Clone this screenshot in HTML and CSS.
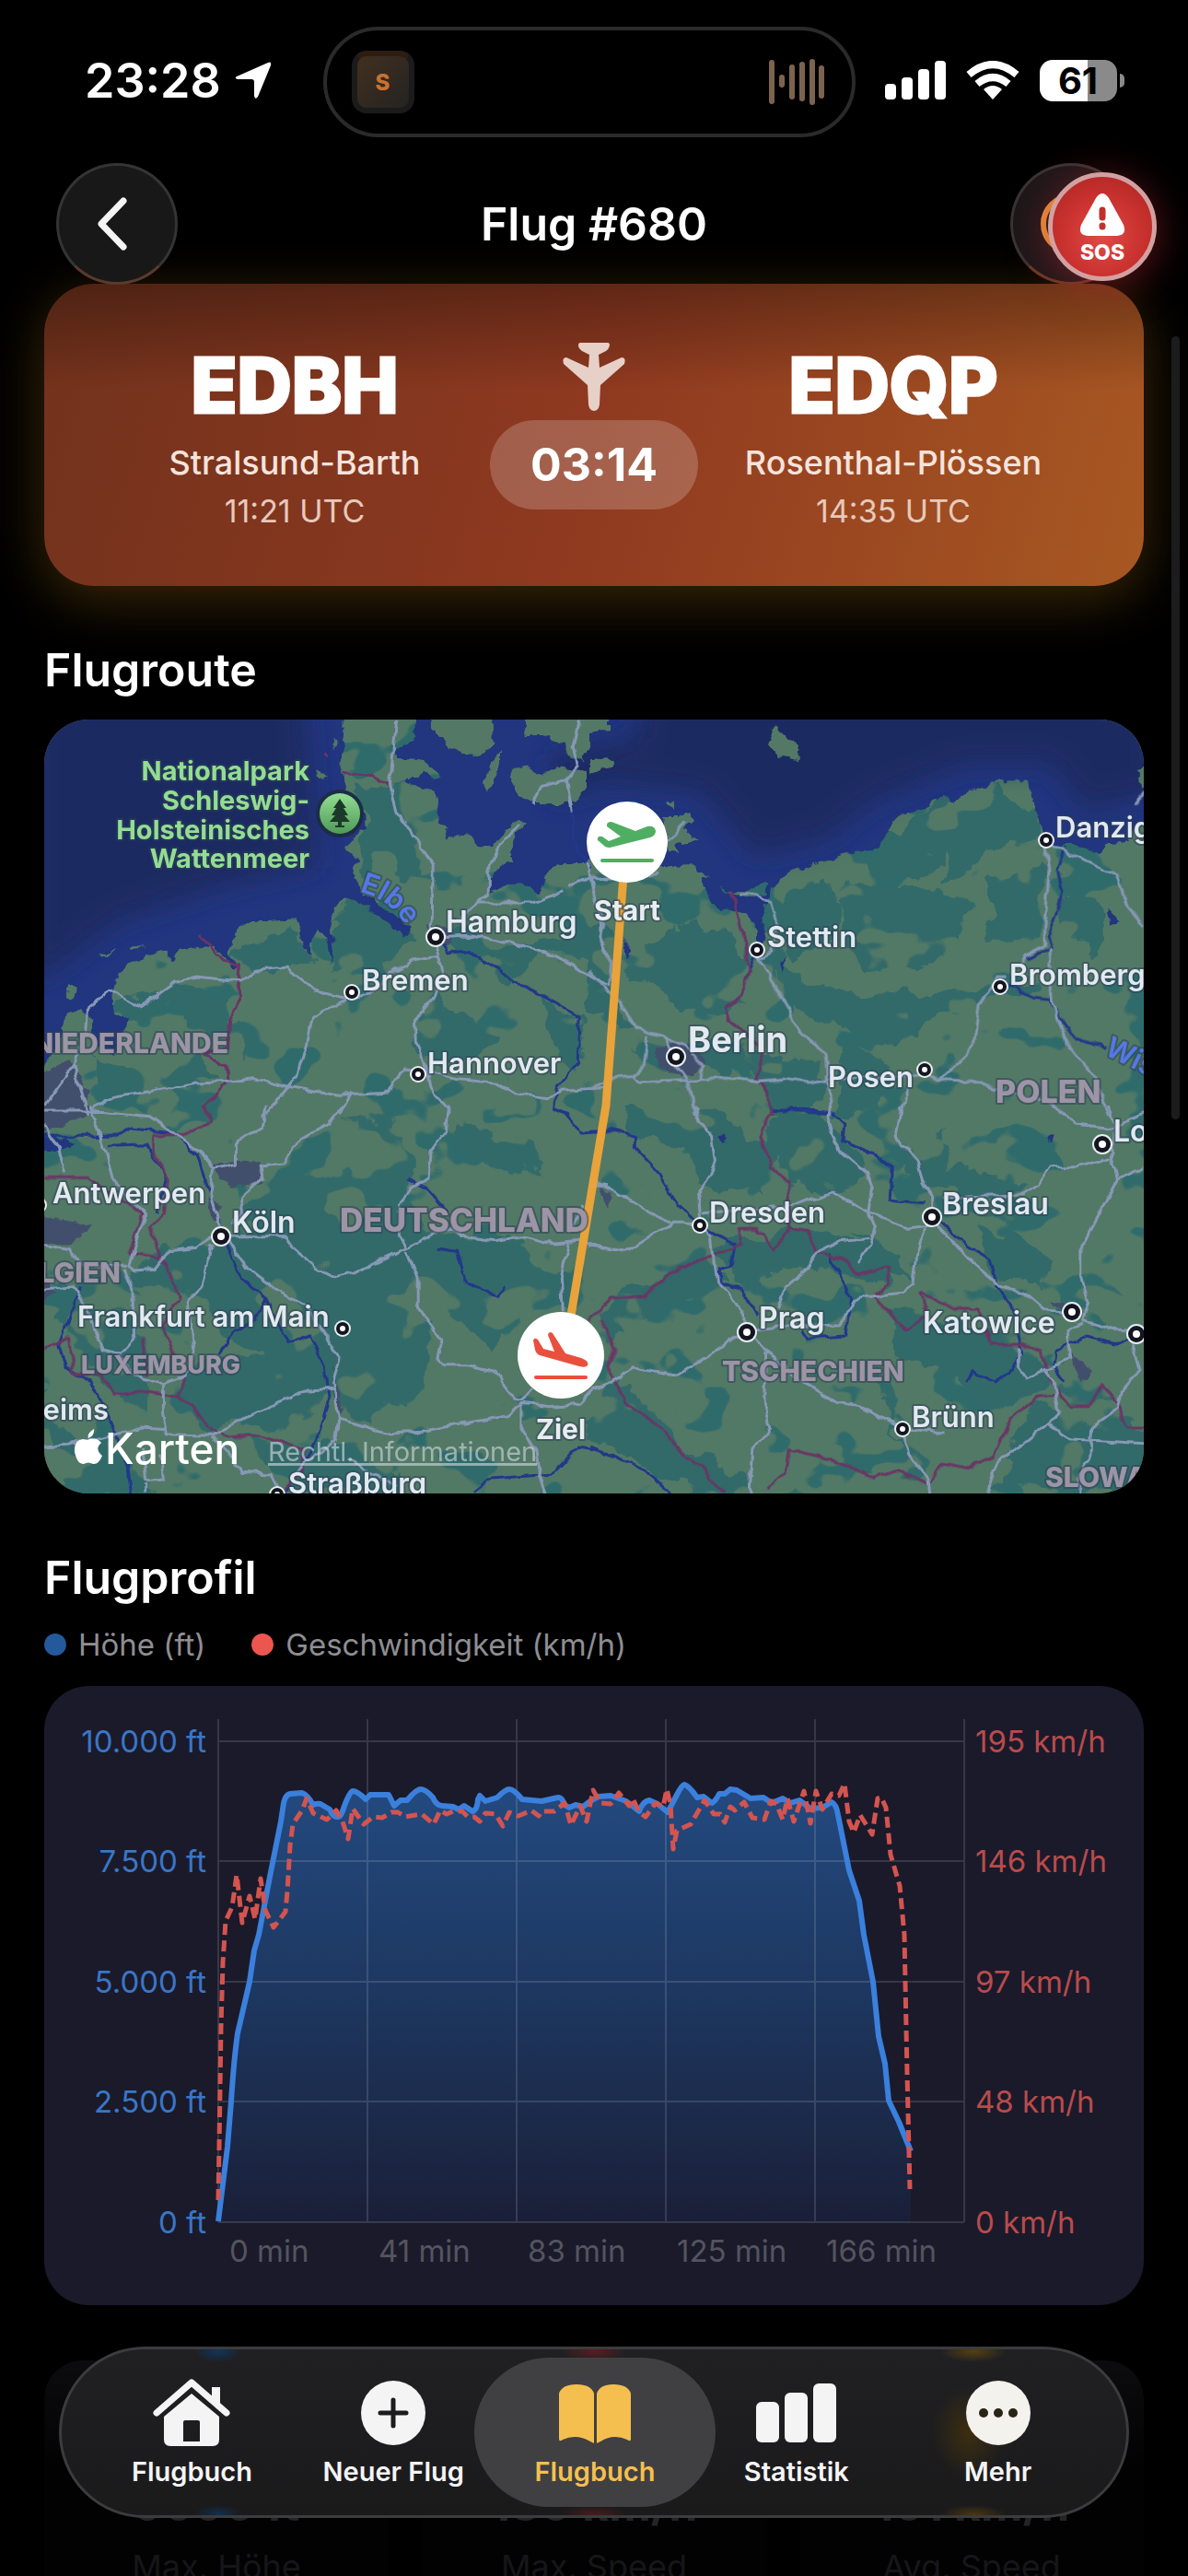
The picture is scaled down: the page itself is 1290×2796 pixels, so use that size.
FILE: index.html
```html
<!DOCTYPE html>
<html lang="de">
<head>
<meta charset="utf-8">
<meta name="viewport" content="width=device-width, initial-scale=1">
<title>Flug #680</title>
<link rel="stylesheet" href="styles.css">
</head>
<body>
<div class="app">
  <div class="status">
    <div class="status-side">
      <span class="clock">23:28</span>
      <svg class="locate" width="42" height="42" viewBox="0 0 42 42" aria-hidden="true"><path d="M37 2Q41 0 40 5L26 39Q23 43 22 38V23Q22 20 19 20H4Q0 19 3 17Z" fill="#fff"/></svg>
    </div>
    <div class="island">
      <span class="island-app">S</span>
      <svg width="62" height="52" viewBox="0 0 62 52" aria-hidden="true"><g stroke="#7c6350" stroke-width="6" stroke-linecap="round"><path d="M4 5V47M15 21V29M26 10V42M37 7V44M48 4V48M58 11V41"/></g></svg>
    </div>
    <div class="status-side status-right">
      <svg width="66" height="42" viewBox="0 0 66 42" aria-hidden="true"><g fill="#fff"><rect y="25" width="12" height="17" rx="4"/><rect x="18" y="18" width="12" height="24" rx="4"/><rect x="36" y="9" width="12" height="33" rx="4"/><rect x="54" width="12" height="42" rx="4"/></g></svg>
      <svg width="58" height="42" viewBox="0 0 58 42" aria-hidden="true"><g fill="none" stroke="#fff" stroke-width="8"><path d="M3 15Q29 -7 55 15"/><path d="M12 25Q29 11 46 25"/></g><path d="M29 42L19 31Q29 23 39 31Z" fill="#fff"/></svg>
      <span class="battery">61</span>
    </div>
  </div>

  <header class="nav">
    <button class="round" aria-label="Zurück"><svg width="34" height="58" viewBox="0 0 34 58"><path d="M30 4L6 29L30 54" fill="none" stroke="#f5f5f5" stroke-width="7" stroke-linecap="round" stroke-linejoin="round"/></svg></button>
    <h1>Flug #680</h1>
    <div class="actions">
      <button class="round ghost" aria-label="Optionen"><span class="ring"></span></button>
      <button class="sos"><svg width="50" height="46" viewBox="0 0 50 46" aria-hidden="true"><path d="M18 5Q25 -5 32 5L48 34Q52 45 41 46H9Q-2 45 2 34Z" fill="#fff"/><path d="M25 18V26M25 35V36" stroke="#c2302c" stroke-width="7" stroke-linecap="round"/></svg>SOS</button>
    </div>
  </header>

  <main>
    <section class="hero">
      <div class="port"><strong>EDBH</strong><span>Stralsund-Barth</span><time>11:21 UTC</time></div>
      <div class="middle">
        <svg width="68" height="74" viewBox="0 0 68 74" aria-hidden="true"><path d="M19 0H49Q51 0 51 3Q50 7 47 9L39 13L40 27L64 16Q69 16 67 23L41 46L40 67Q39 74 34 74Q29 74 28 67L27 46L1 23Q-1 16 4 16L28 27L29 13L21 9Q17 6 17 3Q17 0 19 0Z" fill="#e6d0c8"/></svg>
        <span class="duration">03:14</span>
      </div>
      <div class="port"><strong>EDQP</strong><span>Rosenthal-Plössen</span><time>14:35 UTC</time></div>
    </section>

    <h2>Flugroute</h2>
    <div class="map">
    <svg viewBox="48 781 1194 840" role="img" aria-label="Karte der Flugroute">
      <defs>
        <filter id="rough" x="0" y="0" width="1" height="1"><feTurbulence type="fractalNoise" baseFrequency=".03" numOctaves="4" seed="4"/><feDisplacementMap in="SourceGraphic" scale="34" xChannelSelector="R" yChannelSelector="G"/></filter>
        <filter id="coast" x="0" y="0" width="1" height="1"><feTurbulence type="fractalNoise" baseFrequency=".08" numOctaves="3" seed="9"/><feDisplacementMap in="SourceGraphic" scale="10" xChannelSelector="R" yChannelSelector="G"/></filter>
        <filter id="wiggle" filterUnits="userSpaceOnUse" x="40" y="770" width="1210" height="860"><feTurbulence type="fractalNoise" baseFrequency=".06" numOctaves="2" seed="2"/><feDisplacementMap in="SourceGraphic" scale="8" xChannelSelector="R" yChannelSelector="G"/></filter>
        <filter id="woods" x="0" y="0" width="1" height="1" color-interpolation-filters="sRGB"><feTurbulence type="fractalNoise" baseFrequency=".014 .018" numOctaves="3" seed="11"/><feColorMatrix values="0 0 0 0 .19  0 0 0 0 .42  0 0 0 0 .42  30 0 0 0 -18"/></filter>
        <filter id="fields" x="0" y="0" width="1" height="1" color-interpolation-filters="sRGB"><feTurbulence type="fractalNoise" baseFrequency=".014 .018" numOctaves="3" seed="31"/><feColorMatrix values="0 0 0 0 .32  0 0 0 0 .475  0 0 0 0 .4  30 0 0 0 -19"/></filter>
        <filter id="soft" x="-.2" y="-.2" width="1.4" height="1.4"><feGaussianBlur stdDeviation="14"/></filter>
        <linearGradient id="park" x1="0" y1="0" x2="0" y2="1"><stop offset="0" stop-color="#93dd92"/><stop offset="1" stop-color="#4f9a58"/></linearGradient>
        <path id="elbe" d="M390 968Q428 976 447 1016"/>
        <g id="town"><circle r="9" fill="#e8edf2"/><circle r="7" fill="#14161f"/><circle r="3" fill="#fff"/></g>
        <g id="city"><circle r="11" fill="#e8edf2"/><circle r="9" fill="#14161f"/><circle r="4" fill="#fff"/></g>
      </defs>
      <rect x="40" y="770" width="1210" height="860" fill="#527966"/>
      <rect x="40" y="770" width="1210" height="860" filter="url(#woods)"/>

      <g fill="#316b6b" filter="url(#rough)">
        <g transform="translate(40 770) scale(.3954 .3333)">
          <path d="M870 250L1000 260L1010 350L1050 470L1060 560L1000 560L980 470L940 470L900 560L880 500L900 380Z"/>
          <path d="M850 620L1000 680L1060 760L960 800L880 830L800 860L820 700ZM590 770L720 700L750 820L690 850L590 840L540 800ZM210 920L330 930L440 890L550 950L520 1060L430 1060L400 960L260 1020L210 980Z"/>
          <path d="M1090 940L1200 1010L1270 1090L1090 1170L1040 1090L1050 990ZM1230 780L1568 700V840L1400 780L1300 900ZM1380 930L1500 1000L1490 1200L1400 1050ZM150 1130L300 1170L420 1130L500 1200L300 1290L200 1230ZM570 1010L600 1060L570 1140Z"/>
        </g>
        <g transform="translate(640 770) scale(.3954 .3333)">
          <path d="M850 360L970 280L1120 240L1140 300L1030 380L1000 450L900 540L780 560L760 480L840 380ZM1050 290L1240 320V420L1080 470L1040 540L950 560ZM520 600L640 560L700 620L680 760L560 830L520 700ZM700 560L940 580L1050 640L1000 780L900 830L760 860L700 760Z"/>
          <path d="M220 700L400 720L420 900L370 1000L250 980L180 900L100 860L110 780ZM480 830L700 930L900 940L1240 880V930L1000 980L860 1100L720 1060L560 960ZM100 1120L340 1080L620 1120L640 1300L520 1320L420 1180ZM1100 540L1240 500V720L1100 760ZM1310 560L1420 700L1380 820L1310 720ZM0 740L60 880L120 1040L0 1000ZM700 1080L830 1140L800 1300L680 1320Z"/>
        </g>
        <g transform="translate(40 1200) scale(.3954 .3333)">
          <path d="M690 220L880 230L900 120L840 60L960 40L1040 200L1010 330L1060 420L1300 440L1480 560L1440 660L1340 640L1250 800L1100 640L1050 900L960 1000L900 1040L820 960L700 860L560 780L450 640L340 560L260 600L300 1000L180 900L60 700L100 560L250 540L350 460L500 480L600 400L570 320Z"/>
          <path d="M1150 60L1350 130L1380 210L1230 200L1140 130ZM380 850L600 820L800 900L780 1000L600 1060L450 1040ZM20 1020L200 1100L330 1262H120L40 1160ZM600 1090L800 1110L1000 1200L980 1262H700ZM400 450L900 500L860 760L600 700Z"/>
        </g>
        <g transform="translate(640 1200) scale(.3954 .3333)">
          <path d="M100 20L280 0L500 150L480 300L330 260L250 120L100 100ZM500 20L660 30L760 180L700 300L560 270L480 140ZM350 450L600 400L800 500L820 600L700 560L620 500L460 600L380 560ZM60 620L330 500L360 580L200 660L60 760L30 700Z"/>
          <path d="M70 880L180 1010L260 1120L380 1160L440 1262H280L100 1130L0 1100V960ZM700 420L860 480L880 560L800 540ZM830 650L1000 700L1190 770L1280 900L1100 1000L960 860L850 820ZM840 180L980 80V200L1200 240L1150 300L920 270ZM1060 380L1300 500L1240 600L1100 520ZM1230 960L1450 1000L1540 1100V1262H1130L1160 1100ZM770 860L830 1000L860 1200L830 900Z"/>
        </g>
      </g>
      <rect x="40" y="770" width="1210" height="860" filter="url(#fields)"/>
      <g fill="#434f6c" filter="url(#coast)">
        <path d="M46 1165L76 1150L96 1185L98 1208L60 1225L46 1230ZM46 1320L100 1330L80 1352L46 1350ZM46 1380L60 1405L46 1412ZM238 1262L280 1260L288 1284L250 1288L230 1268ZM712 1138L745 1130L765 1150L750 1168L715 1160ZM465 1003L492 1010L490 1025L468 1026ZM226 1300L238 1310L240 1330L230 1322ZM362 1480L372 1530L366 1536ZM652 1288L664 1295L660 1312ZM1160 1462L1186 1490L1172 1500ZM1140 1412L1156 1416L1152 1424Z"/>
      </g>

      <g filter="url(#coast)" fill="#22357f">
        <path d="M30 760H374L372 797L374 813L370 837L376 853L370 870L396 883L398 900L384 907L374 920L388 933L384 953L396 970L448 1008L440 1016L396 984L374 974L364 984L358 1010L362 1030L360 1047L354 1017L344 1008L336 1024L338 1037L330 1027L322 997L293 1000L265 1000L255 1010L253 1023L247 1037L259 1047L255 1053L233 1028L214 1027L190 1037L186 1045L180 1032L158 1037L139 1045L125 1063L121 1077L123 1100L139 1107L133 1130L125 1147L111 1140L100 1130V1107L87 1095L71 1100L65 1130L51 1153L30 1170Z"/>
        <path d="M453 760L451 800L431 813L429 825L445 823L459 825L479 842L471 847L459 835L451 845L435 847L471 858L477 870L475 893L487 898L483 913L492 905L514 907L520 917L530 920L542 913L550 900L562 890L570 897L562 903L556 913V933L542 940L534 953L532 970L550 960L562 957L577 963L585 970L597 943L613 937H637L641 930L660 940H725L739 943L750 937L762 947L790 967H810L830 958L838 963L857 947L893 935L925 925L948 923L964 903L974 887L996 882L1025 863L1035 870L1055 857L1087 847L1118 848L1122 870L1130 900L1146 917H1166L1193 927L1203 917L1225 913L1233 897L1260 883V760Z"/>
        <path d="M762 953L778 952L786 967L814 973L830 970L838 957L836 970L826 997L832 1023L822 1027V1003L810 993L790 988L770 980ZM677 1020L687 1030L683 1042ZM46 1230L80 1240L60 1250L46 1248ZM1137 1232L1143 1229L1140 1243ZM1205 985L1216 1000L1206 1008ZM780 1236L788 1232L786 1242ZM847 1044L852 1040L850 1058Z"/>
      </g>
      <g fill="#1d2a62" filter="url(#soft)"><path d="M30 750H330L345 940L250 960L130 1000L50 1060H30ZM700 740H1260V860L1180 880L1140 830H1050L950 870L900 910L820 930L760 860L660 850L600 870V820L690 800Z"/></g>
      <g filter="url(#coast)" fill="#527966">
        <path d="M467 760H536L534 813L514 820L487 813L483 802L467 793ZM564 760H662V793L640 797V817L637 817L633 827L617 820L613 807L590 798L572 798ZM544 812V830L530 860L524 850L532 833ZM558 835L574 832L586 840L605 833L637 837V853L625 867L609 873L582 873L558 860L554 847ZM640 823L668 825L666 832L640 840Z"/>
        <path d="M719 887H735L747 882L755 890L743 900L759 913L735 917L737 925L725 923ZM841 788L869 812L866 825L850 822L835 810ZM725 872L735 868L729 878ZM361 800L366 802L362 815ZM345 835L354 844L346 845ZM75 1068L84 1072L80 1086L72 1082ZM1236 835L1260 825V862L1238 855ZM108 1036L128 1030L110 1040ZM140 1028L162 1025L142 1031Z"/>
      </g>

      <g class="rivers" filter="url(#wiggle)">
        <g transform="translate(40 770) scale(.3954 .3333)"><path d="M1110 760L1130 795L1180 785L1260 840L1310 890L1370 920L1450 970L1490 1000L1485 1150L1430 1230L1420 1300L1460 1320M1470 335V420L1520 520"/></g>
        <g transform="translate(640 770) scale(.3954 .3333)"><path d="M1310 450L1285 520L1300 600L1270 700L1265 780L1200 810M1150 900L1220 940L1260 945L1335 1075L1420 1100M460 790L430 880M500 1300L580 1308L660 1312"/></g>
        <g transform="translate(40 1200) scale(.3954 .3333)"><path d="M20 100H200L260 75L380 90L440 160L480 300L510 420L560 560L630 630L600 700L540 740L500 810M630 630L690 775L750 750L790 850L800 960L770 1090L680 1262M120 590L60 780L80 850L150 900L200 1020L250 1180L260 1262M200 130L300 125L355 230L330 350M1420 10L1460 30L1495 90L1568 85M1020 240L1070 270L1130 350M1100 465L1155 475L1180 575L1260 620L1285 590M1200 1262L1250 1215L1415 1200L1490 1110L1568 1130"/></g>
        <g transform="translate(640 1200) scale(.3954 .3333)"><path d="M0 85L60 80L125 100V140L190 220L240 320L290 375L330 410L400 450L390 520L360 530V575L420 600L460 680M500 15L590 10L665 20L700 60L695 120L780 155L830 200L825 310L920 320M960 370L1030 450L1100 500L1120 590L1170 670L1180 760L1190 800L1160 860L1115 900L1050 860L1035 900M655 480L720 630L705 750L595 760L580 730M0 1110L60 1140L150 1185L220 1262M1500 750L1450 775L1365 750L1280 800L1275 840L1305 900"/></g>
      </g>
      <g class="borders" filter="url(#wiggle)">
        <g transform="translate(40 770) scale(.3954 .3333)"><path d="M835 205L920 215L965 245M445 735L510 820L555 830V950L530 1020L525 1100L460 1130L520 1160L530 1210L455 1300M790 140L800 150"/></g>
        <g transform="translate(640 770) scale(.3954 .3333)"><path d="M390 590L410 680L430 780L440 850L420 930L380 970V1015L430 1050L475 1120L460 1200L490 1250L500 1320"/></g>
        <g transform="translate(40 1200) scale(.3954 .3333)"><path d="M460 0L480 50L400 95H320V150L360 240L350 350L310 390L340 490L370 560L390 620L345 720L380 830M20 235H140L220 300L290 350L255 480L340 495M20 790L90 760L100 870L180 880L210 940L290 930L390 950L430 980L470 1050L530 1080L610 1070L730 1120V1190L680 1250M290 750L300 880M410 880L390 950"/></g>
        <g transform="translate(640 1200) scale(.3954 .3333)"><path d="M500 0L470 100L500 200L545 250L550 400L510 470L460 400H410L420 450L330 490L220 550L150 620L60 630L0 700M550 400L600 410L620 480L700 500L740 550L820 530V580L780 620L870 730L930 680L910 610L1000 660H1070L1100 780H1190L1240 800L1260 880L1290 940L1320 980H1370L1410 910L1450 970L1480 1050H1522M1280 940L1230 945L1160 1020L1110 1140L1040 1180L970 1165L930 1230L850 1190L780 1210L680 1160L550 1115L540 1195L490 1250M30 700L70 790L50 850L100 970L190 1040L260 1140L310 1180L370 1262"/></g>
      </g>
      <g class="roads" filter="url(#wiggle)">
        <g transform="translate(40 770) scale(.3954 .3333)"><path d="M988 33L970 240L990 340L1088 500L1085 750L1100 800L1115 860L1085 950L1038 1010L1040 1080L1075 1180L1090 1250L1130 1300V1320M1490 33L1475 120L1485 190L1455 230L1385 250L1360 305M1455 230L1470 335M1325 370L1270 440L1240 530V600L1140 700M1215 630L1360 630L1445 595M1460 575L1500 550H1568M1510 500L1525 570L1550 700V760L1568 800M1110 740L1180 735L1290 760L1400 790L1470 835L1510 860L1568 895M1100 805L1030 820L970 860L930 920L850 940L770 920L685 840L600 850L560 885L440 870L380 885L285 968L200 912L135 975L130 1060L100 1160L20 1290M850 945L755 1000L740 1090L715 1195L690 1230L630 1320M150 1300L210 1265L440 1215L530 1210L590 1200L700 1230L830 1255L970 1245L1005 1170L1070 1175L1150 1205L1260 1215L1310 1250L1400 1268L1440 1240L1568 1232M865 1245L830 1320M100 1160L140 1320"/></g>
        <g transform="translate(640 770) scale(.3954 .3333)"><path d="M5 560L15 620L40 700L30 740L60 820L55 900M0 850L80 950L130 1040L205 1065L260 1095L310 1160L305 1210M205 1065L235 1150L270 1210L290 1320M160 1060L150 1160L125 1195L145 1215L380 1200L460 1210L530 1203L600 1215L660 1205L930 1190L960 1205L1050 1210L1140 1245L1250 1275L1310 1320M125 1195L60 1200L0 1235M410 600H440L500 625L515 700L500 790L465 810L520 920L550 980L580 1055L650 1120L665 1320M965 1205L1055 1100L1070 960L1105 900L1115 870H1150M1250 440L1262 520L1248 770L1200 800L1180 840M1262 780L1270 950L1310 1080L1385 1190L1425 1320M1270 445L1360 490L1450 540L1475 640L1522 705M215 430L265 365M1522 270L1497 310M875 1230V1260L850 1320M0 550L140 555L190 530"/></g>
        <g transform="translate(40 1200) scale(.3954 .3333)"><path d="M20 15H140L310 35L370 85L450 150L485 205L475 280L505 400M145 0L190 150L215 260L300 350L270 460L255 520L270 540L320 535L345 500L360 470L440 460L480 430M20 60L60 140L80 220M20 455L90 470L125 520H250M630 0L620 70L550 110V190L485 205M840 0L800 60L710 120L680 185L615 195L620 235L560 300L565 350L535 385M1130 0L1120 90L1080 150L1075 240L1025 265L995 330V420L1015 465L930 510L870 545L820 560L770 530L700 460L680 425H530M1015 465L1095 420L1140 400L1190 430L1260 440L1330 425L1420 450L1500 440L1568 465M1015 475L1045 560V650L1110 760L1100 820L1120 845H1180L1260 865L1290 930L1330 960M530 440L570 520L660 600L740 650L780 730L800 750V780L830 820L815 900L830 1020L820 1090L740 1160L700 1210M830 1020L960 1065L1060 1060L1200 1030L1290 1010L1330 970L1410 980L1490 970L1530 920L1568 905M480 450L455 590L415 640L430 800L410 880L345 905L260 880L230 810L180 795L150 700L105 590L20 600M230 810L270 760L265 600L240 530M345 905V1000L355 1070L480 1075L600 1000L740 930L815 925M20 1110L80 1105L180 1080L290 1050L355 1055M290 1110L300 1220L350 1215L340 1130M300 1230V1262M480 1080L540 1150L560 1195L640 1200L660 1250M1460 450L1440 560L1445 670M1500 330L1460 420M1330 975V1050L1370 1120L1380 1200L1400 1262M1330 960L1360 920M860 1150L900 1190L990 1240M1540 255L1568 260"/></g>
        <g transform="translate(640 1200) scale(.3954 .3333)"><path d="M288 0L300 50L335 95L345 180L330 230L300 280L305 370L330 430L335 485L350 520L355 575L390 620L440 720M0 455L100 475L180 415L230 385H300M20 250L120 310L220 385M310 350L560 325L670 285L760 340L870 400L935 390M665 0L655 60L690 150L760 220L775 270L765 350L785 390L770 460L740 510M770 430L690 440L620 480L600 530L540 590L520 660M855 0L840 100L900 180L915 250L940 300V370L1050 510L1130 590L1190 605L1250 665L1320 675M920 400L900 480L890 580L860 610L780 620L730 635L690 710L520 720L450 730M970 300L1190 290L1230 260L1265 200H1340L1430 170M1270 0L1340 60L1440 75L1522 25M1425 0L1440 75L1435 170L1450 240L1350 460V550L1370 640L1355 700L1450 735L1500 740M1450 240L1522 200M1355 710L1315 730L1325 825L1250 860L1200 885L1180 850L1185 790M1250 860L1275 900L1290 1000L1260 1035L1200 1095L1120 1160L1090 1262M1500 750L1495 800L1510 860L1460 930L1450 990L1380 1050L1375 1150L1345 1200V1262M1260 1035L1320 1085L1380 1090L1522 1100M410 750L320 820L240 880L120 855L60 900L0 930M440 745L490 800L570 890L680 970L740 980L860 1050L970 1065M860 1060L880 1140L930 1210L935 1262M485 800L480 950L495 1050L450 1120L440 1262"/></g>
      </g>

      <path d="M677 950L658 1200L618 1440" fill="none" stroke="#e8a33b" stroke-width="9" stroke-linejoin="round"/>

      <g class="country">
        <text x="248" y="1143" text-anchor="end" class="c30">NIEDERLANDE</text>
        <text x="131" y="1392" text-anchor="end" class="c30">BELGIEN</text>
        <text x="369" y="1337" class="c36">DEUTSCHLAND</text>
        <text x="88" y="1491" class="c26">LUXEMBURG</text>
        <text x="1081" y="1197" class="c33">POLEN</text>
        <text x="784" y="1499" class="c30">TSCHECHIEN</text>
        <text x="1135" y="1614" class="c30">SLOWAKEI</text>
      </g>
      <g class="park" text-anchor="end">
        <text x="336" y="847">Nationalpark</text><text x="336" y="879">Schleswig-</text><text x="336" y="911">Holsteinisches</text><text x="336" y="942">Wattenmeer</text>
      </g>
      <circle cx="369" cy="883" r="26" fill="#1c2d45"/><circle cx="369" cy="883" r="22" fill="url(#park)"/>
      <path d="M369 867L376 877H373L378 885H374L380 892H371V896H374V898H364V896H367V892H358L364 885H360L365 877H362Z" fill="#1c3a2a"/>
      <g class="river-name"><text><textPath href="#elbe">Elbe</textPath></text><text transform="translate(1198 1144) rotate(26)">Wisła</text></g>

      <g>
        <use href="#city" x="473" y="1017"/><use href="#town" x="382" y="1077"/><use href="#town" x="454" y="1166"/><use href="#town" x="1136" y="912"/><use href="#town" x="822" y="1031"/><use href="#town" x="1086" y="1071"/><use href="#city" x="734" y="1147"/><use href="#town" x="1004" y="1161"/><use href="#town" x="42" y="1308"/><use href="#city" x="240" y="1342"/><use href="#town" x="372" y="1442"/><use href="#town" x="301" y="1622"/><use href="#town" x="760" y="1330"/><use href="#city" x="1012" y="1321"/><use href="#city" x="811" y="1446"/><use href="#city" x="1164" y="1424"/><use href="#city" x="1197" y="1242"/><use href="#city" x="1234" y="1448"/><use href="#town" x="980" y="1551"/>
      </g>
      <g class="place">
        <text x="393" y="1075">Bremen</text><text x="464" y="1165">Hannover</text><text x="1146" y="909">Danzig</text><text x="833" y="1028">Stettin</text><text x="1096" y="1069">Bromberg</text><text x="899" y="1180">Posen</text><text x="57" y="1306">Antwerpen</text><text x="84" y="1440">Frankfurt am Main</text><text x="118" y="1541" text-anchor="end">Reims</text><text x="313" y="1621">Straßburg</text><text x="770" y="1327">Dresden</text><text x="990" y="1549">Brünn</text>
        <g class="big"><text x="484" y="1012">Hamburg</text><text x="252" y="1338">Köln</text><text x="1023" y="1318">Breslau</text><text x="824" y="1442">Prag</text><text x="1002" y="1447">Katowice</text><text x="1209" y="1239">Lodz</text></g>
        <text x="747" y="1142" class="capital">Berlin</text>
      </g>

      <g class="pin"><circle cx="681" cy="914" r="44"/><circle cx="609" cy="1471" r="47"/></g>
      <g transform="translate(681 914)" fill="#4fae62"><path d="M-32 -2Q-33 -7 -27 -6L-20 -1L-7 -6L-22 -17Q-23 -22 -17 -22L9 -12L22 -17Q30 -18 31 -12Q31 -7 25 -5L-19 6Q-24 6 -26 3Z"/><rect x="-29" y="18" width="58" height="4" rx="2"/></g>
      <g transform="translate(609 1471)" fill="#ea4f3d"><path d="M-30 -16Q-29 -20 -25 -17L-19 -7L-7 -4L-14 -22Q-13 -27 -9 -24L5 -2L22 3Q31 6 29 11Q27 14 20 12L-23 0Q-27 -2 -28 -6Z"/><rect x="-29" y="22" width="58" height="4" rx="2"/></g>
      <g class="pin-name" text-anchor="middle"><text x="681" y="999">Start</text><text x="609" y="1562">Ziel</text></g>

      <path d="M96 1561Q94 1556 102 1551Q103 1558 96 1561ZM95 1563Q104 1559 110 1566Q102 1573 111 1580Q107 1590 101 1589Q96 1586 91 1589Q84 1590 81 1576Q80 1563 90 1562Z" fill="#fff"/>
      <text x="114" y="1589" class="brand">Karten</text>
      <a href="#"><text x="291" y="1586" class="legal">Rechtl. Informationen</text></a>
    </svg>
    </div>

    <h2>Flugprofil</h2>
    <div class="legend"><span class="key blue">Höhe (ft)</span><span class="key red">Geschwindigkeit (km/h)</span></div>
    <div class="chart">
    <svg viewBox="48 1830 1194 672" role="img" aria-label="Höhe und Geschwindigkeit über die Flugzeit">
      <defs><linearGradient id="fill" gradientUnits="userSpaceOnUse" x1="0" y1="1937" x2="0" y2="2412"><stop offset="0" stop-color="#234a80"/><stop offset=".5" stop-color="#1d365e"/><stop offset="1" stop-color="#1a1f38"/></linearGradient></defs>
      <path fill="url(#fill)" d="M237 2412L247 2330L251 2281L258 2207L271 2151L276 2117L281 2100L293 2037L305 1977L308 1957L315 1947L328 1946L340 1959L348 1958L367 1972L383 1945L397 1952L402 1948H422L428 1959L435 1954H442L457 1942L477 1959L492 1961L515 1966L521 1949L527 1954L540 1951L553 1942L570 1953L588 1954L608 1951L615 1959L633 1960L650 1950L663 1949L680 1955L694 1965L705 1954L725 1966L743 1937L757 1950L773 1956L782 1947L793 1942L815 1953L832 1952L850 1953L868 1954L883 1963L893 1962L903 1957L910 1970L922 2030L933 2063L938 2100L948 2151L954 2210L961 2240L965 2280L976 2303L989 2335V2412Z"/>
      <path class="grid" d="M237 1866V2412M399 1866V2412M561 1866V2412M723 1866V2412M885 1866V2412M1047 1866V2412M237 1890H1047M237 2020H1047M237 2151H1047M237 2281H1047M237 2412H1047"/>
      <path class="altitude" d="M237 2411L247 2330L251 2281Q254 2235 258 2207L271 2151L276 2117L281 2100L293 2037L305 1977L308 1957Q310 1948 315 1947L328 1946Q334 1948 340 1959Q343 1957 348 1958L358 1964Q362 1973 367 1972Q370 1973 374 1960Q380 1944 383 1944Q388 1944 397 1953L402 1948H422L428 1960L435 1954H442Q452 1942 457 1942Q462 1942 470 1951Q474 1960 480 1960L492 1961L498 1964L504 1960L513 1966Q518 1965 519 1953L521 1949L527 1955L540 1951Q549 1942 553 1942Q558 1942 567 1953L588 1955L606 1951Q610 1950 613 1959L618 1962L625 1959L633 1961L641 1955L650 1950L663 1949L680 1955L694 1966Q698 1955 705 1954L714 1958L725 1967L735 1948Q740 1938 743 1937Q748 1938 757 1951L764 1950L773 1957Q777 1955 781 1947L787 1947L793 1942L800 1943L815 1952L829 1951L838 1957L850 1952L858 1957L868 1954L880 1963L893 1962L903 1956Q908 1958 910 1970L922 2030L933 2063L938 2100L948 2151L954 2210L961 2240L965 2280L976 2303L989 2335"/>
      <path class="speed" d="M237 2388L238 2330L240 2200L242 2130L245 2085L252 2070L257 2035L263 2087L271 2058L277 2083L283 2039L288 2073L297 2092L310 2075L312 2053L315 2003L318 1980L328 1965L333 1952L340 1968L355 1975L365 1965L372 1977L378 1996L383 1963L395 1980L405 1972L415 1973L425 1967H432L440 1972L458 1969L471 1980L478 1965L485 1969L492 1966H502L508 1972H515L521 1977L527 1968L538 1969L546 1982L553 1967L563 1971L577 1965L585 1971L588 1966H602L613 1957L620 1981L630 1960L637 1977L644 1943L652 1957L663 1958L672 1946L683 1960L687 1952L694 1967L701 1972L712 1957L720 1961L724 1942L728 1958L731 2007L735 1987L750 1980L765 1954L775 1969H782L787 1978L793 1961L798 1965L808 1956L817 1973L830 1975L837 1955L843 1958L850 1975L855 1952L862 1977L873 1944L880 1979L886 1944L893 1964L903 1947L911 1949L917 1936L922 1977L927 1989L934 1970L947 1991L953 1952L957 1951L962 1962L967 2013L977 2047L982 2100L983 2151L985 2250L988 2376"/>
      <g class="axis feet" text-anchor="end"><text x="224" y="1902">10.000 ft</text><text x="224" y="2032">7.500 ft</text><text x="224" y="2163">5.000 ft</text><text x="224" y="2293">2.500 ft</text><text x="224" y="2424">0 ft</text></g>
      <g class="axis kmh"><text x="1059" y="1902">195 km/h</text><text x="1059" y="2032">146 km/h</text><text x="1059" y="2163">97 km/h</text><text x="1059" y="2293">48 km/h</text><text x="1059" y="2424">0 km/h</text></g>
      <g class="axis min"><text x="249" y="2455">0 min</text><text x="411" y="2455">41 min</text><text x="573" y="2455">83 min</text><text x="735" y="2455">125 min</text><text x="897" y="2455">166 min</text></g>
    </svg>
    </div>

    <section class="stats">
      <div class="stat"><strong>9090 ft</strong><span>Max. Höhe</span></div>
      <div class="stat"><strong>180 km/h</strong><span>Max. Speed</span></div>
      <div class="stat"><strong>161 km/h</strong><span>Avg. Speed</span></div>
    </section>
  </main>

  <nav class="tabs">
    <a href="#" class="tab"><svg width="84" height="76" viewBox="0 0 84 76" aria-hidden="true"><path d="M4 38L42 5L80 38" fill="none" stroke="#f4f4f5" stroke-width="7" stroke-linecap="round" stroke-linejoin="round"/><path d="M64 10H73V32L64 24Z" fill="#f4f4f5"/><path d="M42 17L72 42V67Q72 74 65 74H19Q12 74 12 67V42ZM33 48V69H51V48Q51 46 49 46H35Q33 46 33 48Z" fill="#f4f4f5" fill-rule="evenodd"/></svg>Flugbuch</a>
    <a href="#" class="tab"><svg width="76" height="76" viewBox="0 0 76 76" aria-hidden="true"><circle cx="38" cy="38" r="35" fill="#f4f4f5"/><path d="M38 24V52M24 38H52" stroke="#1c1c1e" stroke-width="5" stroke-linecap="round"/></svg>Neuer Flug</a>
    <a href="#" class="tab active" aria-current="page"><svg width="80" height="76" viewBox="0 0 80 76" aria-hidden="true"><path d="M39 71V17Q36 7 20 7Q4 7 1 17V66Q1 70 5 67Q20 60 35 69ZM42 71V17Q45 7 60 7Q76 7 79 17V66Q79 70 75 67Q60 60 46 69Z" fill="#f5bf4f"/></svg>Flugbuch</a>
    <a href="#" class="tab"><svg width="88" height="76" viewBox="0 0 88 76" aria-hidden="true"><g fill="#f4f4f5"><rect y="26" width="25" height="44" rx="6"/><rect x="31" y="16" width="25" height="54" rx="6"/><rect x="62" y="6" width="25" height="64" rx="6"/></g></svg>Statistik</a>
    <a href="#" class="tab"><svg width="76" height="76" viewBox="0 0 76 76" aria-hidden="true"><circle cx="38" cy="38" r="35" fill="#f4f2ec"/><g fill="#2a2417"><circle cx="22" cy="38" r="5"/><circle cx="38" cy="38" r="5"/><circle cx="54" cy="38" r="5"/></g></svg>Mehr</a>
  </nav>
  <div class="scrollbar"></div>
</div>
</body>
</html>
```
FILE: styles.css
```css
* { box-sizing: border-box; }
body { margin: 0; background: #000; color: #fff; font-family: Inter, "Liberation Sans", sans-serif; }
button { border: 0; padding: 0; font: inherit; color: inherit; }
a { color: inherit; text-decoration: none; }
h1, h2 { margin: 0; font-weight: 600; }

.app { position: relative; height: 100vh; overflow: hidden; }

.status { display: grid; grid-template-columns: 1fr 578px 1fr; height: 177px; padding: 29px 11px 0 0; align-items: start; }
.status-side { display: flex; align-items: center; gap: 14px; height: 116px; padding-left: 92px; }
.status-right { padding: 0 0 0 32px; gap: 22px; }
.clock { font-size: 52px; font-weight: 600; }
.island { display: flex; align-items: center; justify-content: space-between; height: 120px; padding: 0 29px 0 27px; border: 4px solid #2a2a2a; border-radius: 60px; }
.island-app { display: grid; place-items: center; width: 68px; height: 68px; border: 6px solid #1c1b1b; border-top-color: #2d1c12; border-radius: 16px; background: linear-gradient(135deg, #42301f, #242322); color: #c9722f; font-size: 24px; font-weight: 800; }
.battery { position: relative; width: 84px; height: 45px; border-radius: 14px; background: linear-gradient(90deg, #fff 62%, #8a8a8a 62%); color: #000; font-size: 40px; font-weight: 700; line-height: 45px; text-align: center; }
.battery::after { content: ""; position: absolute; right: -8px; top: 15px; width: 5px; height: 15px; border-radius: 0 5px 5px 0; background: #8a8a8a; }

.nav { position: relative; z-index: 2; display: flex; align-items: center; justify-content: space-between; height: 132px; padding: 0 61px; }
.nav h1 { font-size: 50px; line-height: 60px; }
.round { display: grid; place-items: center; width: 132px; height: 132px; border: 3px solid #343434; border-bottom-color: #5a3a2c; border-radius: 50%; background: #181818; }
.round svg { margin-right: 12px; }
.actions { position: relative; }
.ghost { background: #1c1719; border-color: #3a3333; border-bottom-color: #6b3a24; }
.ring { width: 66px; height: 66px; border: 6px solid #e8943a; border-radius: 50%; }
.sos { position: absolute; left: 41px; top: 10px; display: flex; flex-direction: column; align-items: center; gap: 6px; width: 118px; height: 118px; padding-top: 18px; border: 5px solid #d3a0a1; border-radius: 50%; background: radial-gradient(circle at 50% 60%, #e04a45, #c9322f 50%, #a92420); box-shadow: 0 6px 44px rgba(190, 40, 50, .5); font-size: 23px; line-height: 24px; font-weight: 800; }

main { display: flex; flex-direction: column; padding: 0 48px; }
.hero { display: grid; grid-template-columns: 1fr 226px 1fr; height: 328px; padding: 64px 60px 0; border-radius: 54px; background: linear-gradient(rgba(0, 0, 0, .32), transparent 35%), linear-gradient(105deg, #72321c, #8f3920 50%, #a85822); box-shadow: 0 14px 60px rgba(150, 100, 20, .4); margin-top: -1px; }
.port { display: flex; flex-direction: column; align-items: center; padding-top: 5px; white-space: nowrap; }
.port strong { font-size: 82px; line-height: 84px; font-weight: 800; -webkit-text-stroke: 3px #fff; stroke-linejoin: round; }
.port span { margin-top: 19px; font-size: 36px; line-height: 44px; font-weight: 500; color: #f6e3dc; }
.port time { margin-top: 9px; font-size: 34px; line-height: 44px; color: #e7c9bc; }
.middle { display: flex; flex-direction: column; align-items: center; gap: 10px; }
.duration { width: 226px; height: 97px; border-radius: 49px; background: rgba(255, 255, 255, .2); font-size: 50px; font-weight: 700; line-height: 97px; text-align: center; }

h2 { margin: 61px 0 24px; font-size: 50px; line-height: 60px; }
.map, .chart { overflow: hidden; border-radius: 48px; }
.map svg, .chart svg { display: block; width: 100%; height: auto; }
.map path { stroke-linejoin: round; }
.rivers path, .borders path, .roads path { fill: none; vector-effect: non-scaling-stroke; }
.rivers path { stroke: #22378a; stroke-width: 3px; }
.borders path { stroke: #6b3565; stroke-width: 3px; }
.roads path { stroke: #8798b5; stroke-width: 3px; }
.map text { paint-order: stroke; stroke: rgba(45, 65, 85, .55); stroke-width: 4px; stroke-linejoin: round; }
.place { fill: #e3e9f0; font-size: 31px; font-weight: 600; }
.big { font-size: 32px; }
.capital { font-size: 38px; font-weight: 700; }
.country { fill: #9d94a6; font-weight: 800; }
.c26 { font-size: 27px; }
.c30 { font-size: 30px; }
.c33 { font-size: 34px; }
.c36 { font-size: 35px; }
.park { fill: #93dd92; font-size: 29px; font-weight: 700; }
.river-name { fill: #5478e8; font-size: 31px; font-weight: 600; }
.pin circle { fill: #fff; }
.pin-name { fill: #e9edf2; font-size: 30px; font-weight: 700; }
.map .brand { fill: #fff; stroke: none; font-size: 46px; font-weight: 500; }
.map .legal { fill: rgba(205, 214, 216, .65); stroke: none; font-size: 29px; text-decoration: underline; }

.legend { display: flex; gap: 50px; margin-bottom: 25px; font-size: 33px; line-height: 40px; color: #8e8e93; }
h2 + .legend { margin-top: -1px; }
.key { display: flex; align-items: center; gap: 13px; }
.key::before { content: ""; width: 24px; height: 24px; border-radius: 50%; background: #24599b; }
.red::before { background: #ec564f; }
.chart { background: #1a1a2b; }
.grid { fill: none; stroke: rgba(255, 255, 255, .13); stroke-width: 2px; }
.altitude { fill: none; stroke: #3a80dc; stroke-width: 6px; stroke-linejoin: round; }
.speed { fill: none; stroke: #d4544f; stroke-width: 5px; stroke-dasharray: 12 6; stroke-linejoin: round; }
.axis { font-size: 33px; }
.feet { fill: #3a76c6; }
.kmh { fill: #b94b4b; }
.min { fill: #54545f; }

.stats { display: grid; grid-template-columns: repeat(3, 1fr); gap: 36px; margin-top: 60px; }
.stat { display: flex; flex-direction: column; align-items: center; height: 300px; padding-top: 126px; border-radius: 42px; background: linear-gradient(#0c0c0e, #020203 40%); }
.stat strong { font-size: 50px; line-height: 60px; color: #242428; }
.stat span { margin-top: 16px; font-size: 36px; line-height: 44px; color: #161619; }

.tabs { position: absolute; left: 64px; right: 64px; bottom: 63px; display: flex; height: 186px; padding: 0 30px 0 32px; border: 3px solid #3c3c3e; border-radius: 93px; background: radial-gradient(ellipse 26px 12px at 170px 2px, #10355c, transparent), radial-gradient(ellipse 36px 12px at 50% 2px, #5a1c20, transparent), radial-gradient(ellipse 36px 12px at 990px 2px, #574010, transparent), radial-gradient(ellipse 26px 10px at 170px 179px, #10304f, transparent), radial-gradient(ellipse 36px 10px at 50% 179px, #4a1a1d, transparent), radial-gradient(ellipse 36px 10px at 990px 179px, #4a3610, transparent), radial-gradient(ellipse 40px 50px at 985px 90px, #3d2e10, transparent), linear-gradient(#202023, #1a1a1b); }
.tab { position: relative; display: flex; flex: 1; flex-direction: column; align-items: center; gap: 6px; padding-top: 31px; font-size: 29px; font-weight: 600; line-height: 40px; color: #f4f4f5; white-space: nowrap; }
.tab svg { position: relative; }
.active { z-index: 0; color: #f5bf4f; }
.active::before { content: ""; position: absolute; z-index: -1; left: -22px; right: -22px; top: 9px; bottom: 9px; border-radius: 81px; background: #404042; }
.scrollbar { position: absolute; right: 9px; top: 365px; width: 9px; height: 850px; border-radius: 5px; background: #1c1c1c; }
```
